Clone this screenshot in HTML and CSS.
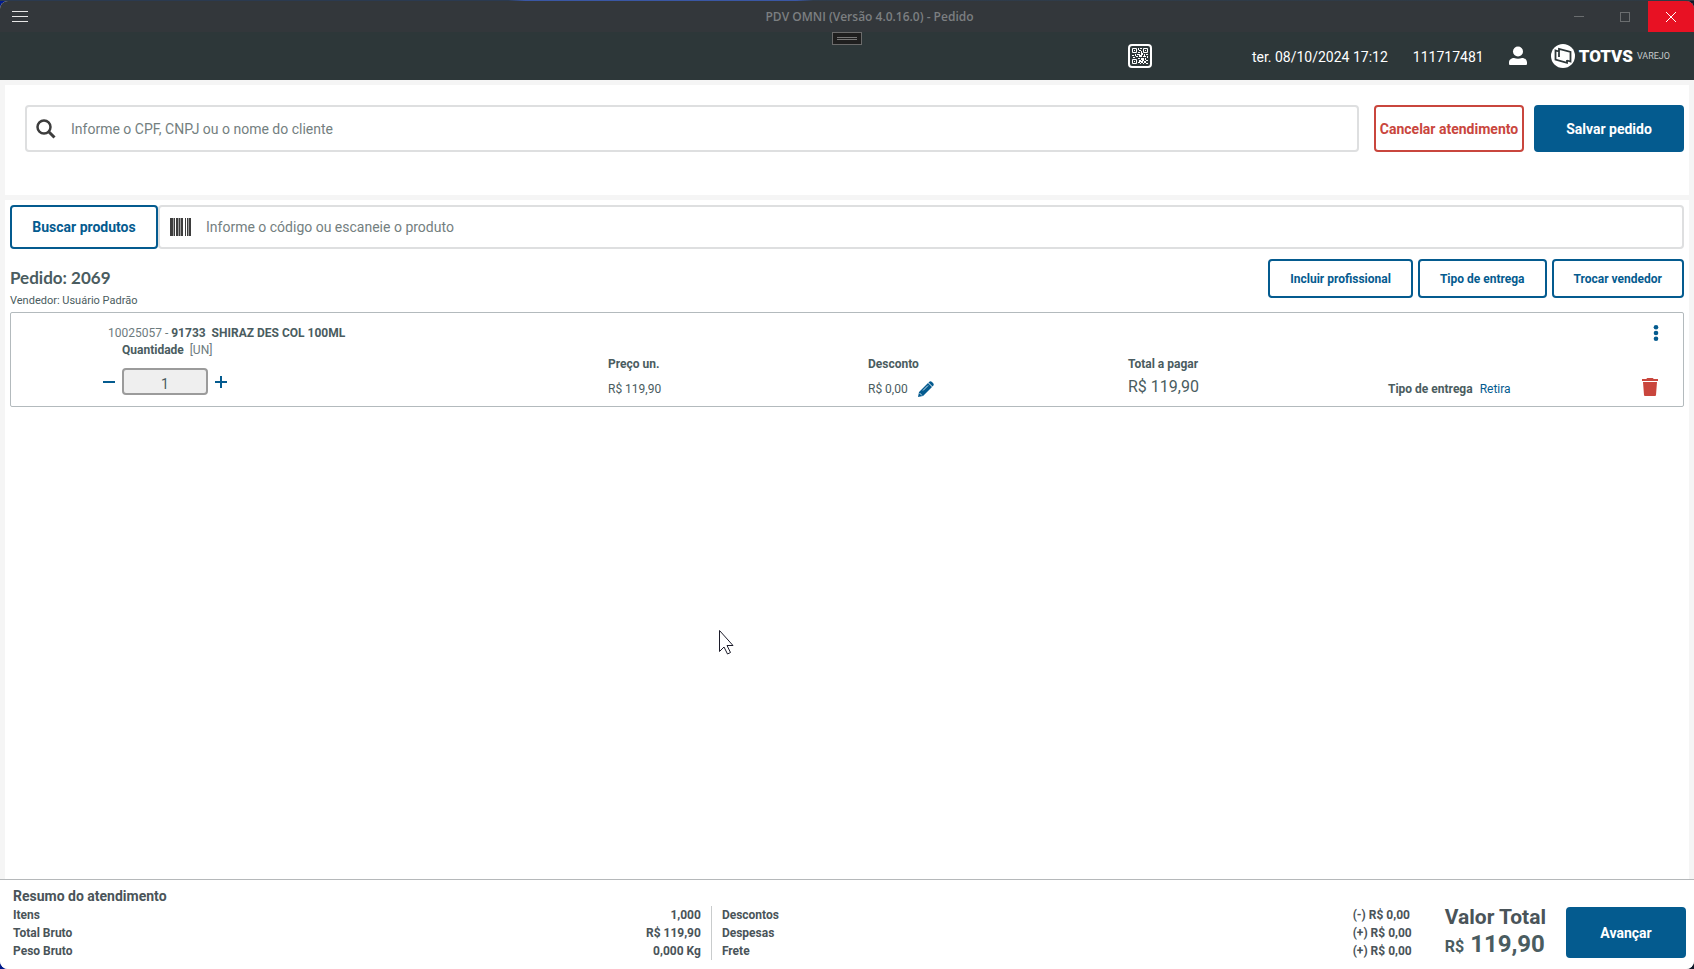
FILE: index.html
```html
<!DOCTYPE html>
<html lang="pt-BR">

<head>
    <meta charset="UTF-8">
    <meta name="viewport" content="width=device-width, initial-scale=1.0">
    <title>PDV OMNI - Pedido</title>
    <link rel="stylesheet" href="styles.css">
</head>

<body>
    <div class="window">
        <div class="titlebar">
            <button class="menu-btn" aria-label="Menu">
                <svg width="16" height="11" viewBox="0 0 16 11"><path d="M0 .5h16M0 5.500h16M0 10.500h16" stroke="#e6e6e6" stroke-width="1"/></svg>
            </button>
            <div class="window-title">PDV OMNI (Versão 4.0.16.0) - Pedido</div>
            <button class="win-btn" aria-label="Minimizar">
                <svg width="10" height="10" viewBox="0 0 10 10"><path d="M0 4.500h10" stroke="#6a6d6f"/></svg>
            </button>
            <button class="win-btn" aria-label="Maximizar">
                <svg width="10" height="10" viewBox="0 0 10 10"><rect x=".5" y=".5" width="9" height="9" fill="none" stroke="#6a6d6f"/></svg>
            </button>
            <button class="win-btn win-close" aria-label="Fechar">
                <svg width="10" height="10" viewBox="0 0 10 10"><path d="M0 0l10 10M10 0L0 10" stroke="#fff"/></svg>
            </button>
        </div>

        <header class="header">
            <button class="handle" aria-label="Recolher"><span></span></button>
            <button class="icon-btn qr" aria-label="QR Code">
                <svg width="24" height="24" viewBox="0 0 24 24" fill="#fff">
                    <rect x="1" y="1" width="22" height="22" rx="3" fill="none" stroke="#fff" stroke-width="2"/>
                    <path fill="none" stroke="#fff" d="M4.500 4.500h4v4h-4zM15.500 4.500h4v4h-4zM4.500 15.500h4v4h-4z"/>
                    <path d="M6 6h1v1H6zM17 6h1v1h-1zM6 17h1v1H6zM10 4h1v2h-1zM12 4h2v1h-2zM11 6h2v1h-2zM13 7h1v2h-1zM10 8h2v1h-2zM4 11h2v1H4zM7 10h1v2H7zM5 13h2v1H5zM8 12h2v1H8zM9 10h3v1H9zM11 11h3v2h-3zM13 9h2v2h-2zM16 10h1v2h-1zM18 10h2v1h-2zM15 12h3v1h-3zM19 12h1v2h-1zM10 14h2v1h-2zM13 14h3v2h-3zM17 14h1v2h-1zM11 16h2v2h-2zM10 18h2v1h-2zM14 16h2v1h-2zM18 16h2v1h-2zM13 17h2v2h-2zM16 17h2v2h-2zM12 19h1v1h-1zM15 19h1v1h-1zM18 19h2v1h-2z"/>
                </svg>
            </button>
            <span class="date">ter. 08/10/2024 17:12</span>
            <span class="user-id">111717481</span>
            <button class="icon-btn user" aria-label="Usuário">
                <svg width="18" height="20" viewBox="0 0 18 20" fill="#fff"><circle cx="9" cy="5.500" r="5"/><path d="M1 19a1 1 0 0 1-1-1v-1.500C0 13.500 2.500 12 5 12q4 1.500 8 0c2.500 0 5 1.500 5 4.500V18a1 1 0 0 1-1 1z"/></svg>
            </button>
            <div class="brand">
                <svg width="24" height="24" viewBox="0 0 24 24"><circle cx="12" cy="12" r="12" fill="#fff"/><path fill="none" stroke="#2d3739" stroke-width="1.800" d="M8 13V5l11.500 3v9.500L16 16.500M8 7.500L4.500 6.500V15.500L16 18.800V16"/></svg>
                <span class="brand-name">TOTVS</span>
                <span class="brand-line">VAREJO</span>
            </div>
        </header>

        <main class="content">
            <section class="customer panel">
                <label class="field customer-field">
                    <svg width="20" height="20" viewBox="0 0 20 20" fill="none" stroke="#3d3d3d"><circle cx="8" cy="8" r="6.500" stroke-width="2.500"/><path d="M12.500 12.500l6 6" stroke-width="3"/></svg>
                    <input type="text" aria-label="Cliente" placeholder="Informe o CPF, CNPJ ou o nome do cliente">
                </label>
                <button class="btn btn-danger">Cancelar atendimento</button>
                <button class="btn btn-primary">Salvar pedido</button>
            </section>

            <section class="order panel">
                <div class="product-search">
                    <button class="btn btn-search">Buscar produtos</button>
                    <label class="field product-field">
                        <svg width="21" height="18" viewBox="0 0 21 18" fill="#3d3d3d"><path d="M0 0h3v18H0zM4 0h1v18H4zM6 0h2v18H6zM9 0h1v18H9zM11 0h2v18h-2zM15 0h1v18h-1zM17 0h1v18h-1zM19 0h2v18h-2z"/><path d="M3 0h1v18H3zM8 0h1v18H8zM10 0h1v18h-1zM18 0h1v18h-1z" opacity=".5"/></svg>
                        <input type="text" aria-label="Produto" placeholder="Informe o código ou escaneie o produto">
                    </label>
                </div>

                <div class="order-head">
                    <div class="order-info">
                        <h1>Pedido: 2069</h1>
                        <p>Vendedor: Usuário Padrão</p>
                    </div>
                    <button class="btn btn-small">Incluir profissional</button>
                    <button class="btn btn-small">Tipo de entrega</button>
                    <button class="btn btn-small">Trocar vendedor</button>
                </div>

                <article class="item">
                    <div class="item-top">
                        <div class="item-name">10025057 - <b>91733&nbsp; SHIRAZ DES COL 100ML</b></div>
                        <button class="icon-btn" aria-label="Mais opções">
                            <svg width="6" height="16" viewBox="0 0 6 16" fill="#045b8f"><circle cx="3" cy="2.300" r="2.300"/><circle cx="3" cy="8" r="2.300"/><circle cx="3" cy="13.700" r="2.300"/></svg>
                        </button>
                    </div>
                    <div class="item-grid">
                        <div class="qty">
                            <label for="qty"><b>Quantidade</b> [UN]</label>
                            <div class="stepper">
                                <button class="icon-btn" aria-label="Diminuir">
                                    <svg width="12" height="12" viewBox="0 0 12 12"><path d="M0 6h12" stroke="#045b8f" stroke-width="2"/></svg>
                                </button>
                                <input type="text" id="qty" value="1">
                                <button class="icon-btn" aria-label="Aumentar">
                                    <svg width="12" height="12" viewBox="0 0 12 12"><path d="M0 6h12M6 0v12" stroke="#045b8f" stroke-width="2"/></svg>
                                </button>
                            </div>
                        </div>
                        <div class="cell">
                            <b>Preço un.</b>
                            <span class="value">R$ 119,90</span>
                        </div>
                        <div class="cell">
                            <b>Desconto</b>
                            <span class="value">R$ 0,00
                                <button class="icon-btn" aria-label="Editar desconto">
                                    <svg width="16" height="16" viewBox="0 0 16 16" fill="#045b8f"><path d="M0 16l1-5L10 2l4 4-9 9zM11 1q1.500-1.500 3 0l1 1q1.500 1.500 0 3l-.5.5-4-4z"/><path d="M5 9.500l5-5M1.500 12l2.500 2.500" stroke="#fff" stroke-width=".8"/></svg>
                                </button>
                            </span>
                        </div>
                        <div class="cell">
                            <b>Total a pagar</b>
                            <span class="value total">R$ 119,90</span>
                        </div>
                        <div class="delivery">
                            <b>Tipo de entrega</b>
                            <a href="#">Retira</a>
                            <button class="icon-btn trash" aria-label="Remover item">
                                <svg width="18" height="18" viewBox="0 0 18 18" fill="#c9463d"><path d="M1 1h4.500q0-1 1-1h5q1 0 1 1H17v2H1z"/><path d="M2 4h14l-1 13q0 1-1 1H4q-1 0-1-1z"/></svg>
                            </button>
                        </div>
                    </div>
                </article>
            </section>
        </main>

        <footer class="footer">
            <div class="summary">
                <h2>Resumo do atendimento</h2>
                <div class="summary-cols">
                    <table>
                        <tr><th>Itens</th><td>1,000</td></tr>
                        <tr><th>Total Bruto</th><td>R$ 119,90</td></tr>
                        <tr><th>Peso Bruto</th><td>0,000 Kg</td></tr>
                    </table>
                    <table class="charges">
                        <tr><th>Descontos</th><td>(-) R$ 0,00</td></tr>
                        <tr><th>Despesas</th><td>(+) R$ 0,00</td></tr>
                        <tr><th>Frete</th><td>(+) R$ 0,00</td></tr>
                    </table>
                </div>
            </div>
            <div class="grand-total">
                <div class="grand-label">Valor Total</div>
                <div class="grand-value"><small>R$</small> 119,90</div>
            </div>
            <button class="btn btn-primary btn-next">Avançar</button>
        </footer>
    </div>

    <svg class="cursor" width="15" height="25" viewBox="0 0 15 25"><path d="M.5.500v21l4.500-4.500 3.500 7 3-1.500-3.500-7h6z" fill="#fff" stroke="#1c1c2a"/></svg>
</body>

</html>
```

FILE: styles.css
```css
* {
    box-sizing: border-box;
}

body {
    margin: 0;
    padding-top: 1px;
    height: 100vh;
    font-family: Roboto, "Liberation Sans", sans-serif;
    font-size: 13px;
    color: #4a5c60;
    background: linear-gradient(to right, #2b3a50 30%, #3a57a5 31%, #3a57a5 47%, #2f3c4c 48%, #2f3a44) top / 100% 1px no-repeat, linear-gradient(to right, #001a8c, #101828);
}

button,
input {
    font-family: inherit;
    font-size: 14px;
    color: inherit;
}

button {
    padding: 0;
    border: none;
    background: none;
    cursor: pointer;
}

svg {
    display: block;
}

.window {
    display: flex;
    flex-direction: column;
    height: 100%;
    border-radius: 8px;
    overflow: hidden;
    background: #f5f5f5;
}

/* title bar */
.titlebar {
    display: flex;
    height: 31px;
    background: #33373b;
}

.menu-btn {
    padding: 0 12px;
}

.window-title {
    flex: 1;
    padding-left: 143px;
    text-align: center;
    font-family: "Open Sans", "Noto Sans", sans-serif;
    font-size: 12px;
    font-weight: 600;
    line-height: 31px;
    color: #7c7f81;
}

.win-btn {
    display: flex;
    align-items: center;
    justify-content: center;
    width: 46px;
}

.win-close {
    background: #e81123;
}

/* header */
.header {
    position: relative;
    display: flex;
    align-items: center;
    justify-content: flex-end;
    height: 48px;
    padding-right: 24px;
    background: #2d3739;
    color: #fff;
    font-size: 14px;
}

.handle {
    position: absolute;
    top: 0;
    left: 50%;
    width: 30px;
    height: 13px;
    margin-left: -15px;
    padding: 4px;
    border: 1px solid #6b6b6b;
    background: #1f1f1f;
}

.handle span {
    display: block;
    height: 3px;
    border: 1px solid #777;
    border-width: 1px 0;
}

.qr {
    margin-right: 100px;
}

.date,
.user-id {
    padding-top: 2px;
}

.date {
    margin-right: 25px;
}

.user-id {
    margin-right: 25px;
}

.user {
    margin-right: 24px;
}

.brand {
    display: flex;
    align-items: center;
    gap: 4px;
}

.brand-name {
    font-size: 17px;
    font-weight: 900;
}

.brand-line {
    font-size: 9px;
    font-weight: 400;
    color: #c5c9ca;
}

/* buttons and fields */
.btn {
    border: 2px solid #045b8f;
    border-radius: 4px;
    background: #fff;
    color: #045b8f;
    font-weight: 700;
}

.btn-primary {
    background: #045b8f;
    color: #fff;
}

.btn-danger {
    border-color: #c9463d;
    color: #c9463d;
}

.btn-small {
    height: 39px;
    padding: 0 20px;
    font-size: 12px;
}

.field {
    display: flex;
    flex: 1;
    align-items: center;
    border: 2px solid #dedfe0;
    border-radius: 4px;
    background: #fff;
}

.field input {
    flex: 1;
    padding: 0;
    border: none;
    outline: none;
    background: none;
}

.field input::placeholder {
    color: #74807f;
    opacity: 1;
}

/* content */
.content {
    display: flex;
    flex: 1;
    flex-direction: column;
    gap: 5px;
    padding: 5px 5px 0;
}

.panel {
    background: #fff;
}

.customer {
    display: flex;
    gap: 10px;
    height: 110px;
    padding: 20px 5px 43px 20px;
}

.customer .btn {
    width: 150px;
}

.customer-field {
    gap: 15px;
    margin-right: 5px;
    padding-left: 9px;
}

.order {
    flex: 1;
    padding: 5px;
}

.product-search {
    display: flex;
    height: 44px;
}

.btn-search {
    width: 148px;
}

.product-field {
    gap: 15px;
    padding-left: 10px;
}

.order-head {
    display: flex;
    gap: 5px;
    margin-top: 10px;
    height: 53px;
}

.order-info {
    flex: 1;
}

.order-info h1 {
    margin: 0;
    font-family: Lato, "Open Sans", sans-serif;
    font-size: 17px;
    line-height: 38px;
}

.order-info p {
    margin: 0;
    font-size: 11px;
    line-height: 8px;
}

/* order item */
.item {
    height: 95px;
    padding-top: 12px;
    border: 1px solid #b3babd;
    border-radius: 2px;
}

.item-top {
    display: flex;
    align-items: center;
    justify-content: space-between;
    padding: 0 24px 0 97px;
    font-size: 12px;
    line-height: 16px;
}

.item-grid {
    display: grid;
    grid-template-columns: 2fr 1fr 1fr 1fr 1fr;
    margin: 0 35px 0 77px;
    font-size: 12px;
}

.qty label {
    display: block;
    padding-left: 34px;
    line-height: 18px;
}

.qty label b {
    margin-right: 3px;
}

.item-name,
.qty label {
    color: #6d7b7e;
}

.item-name b,
.qty label b {
    color: #4a5c60;
}

.stepper {
    display: flex;
    align-items: center;
    gap: 7px;
    margin-top: 9px;
    padding-left: 15px;
}

.stepper input {
    width: 86px;
    height: 27px;
    padding: 4px 0 0;
    border: 2px solid #9b9b9b;
    border-radius: 4px;
    background: #efefef;
    text-align: center;
}

.cell {
    display: flex;
    flex-direction: column;
    padding-top: 13px;
}

.cell b {
    line-height: 20px;
}

.value {
    display: flex;
    align-items: center;
    gap: 10px;
    height: 29px;
}

.total {
    height: 24px;
    font-size: 16px;
}

.delivery {
    display: flex;
    align-items: center;
    gap: 7px;
    padding-top: 43px;
    height: 53px;
    line-height: 10px;
}

.delivery a {
    color: #045b8f;
    text-decoration: none;
}

.trash {
    margin: 0 -11px 4px auto;
}

/* footer */
.footer {
    display: flex;
    height: 90px;
    padding: 0 8px 0 13px;
    border-top: 1px solid #b5b8ba;
    background: #fff;
    color: #4a5459;
}

.summary {
    flex: 1;
}

.summary h2 {
    margin: 0;
    padding-top: 6px;
    font-size: 14px;
    line-height: 20px;
}

.summary-cols {
    display: flex;
    gap: 10px;
}

table {
    flex: 1;
    border-collapse: collapse;
    font-size: 12px;
    font-weight: 700;
    line-height: 18px;
}

th,
td {
    padding: 0;
    text-align: left;
}

td {
    text-align: right;
}

.charges {
    flex-basis: 14px;
    border-left: 1px solid #c9cccd;
}

.charges th {
    padding-left: 10px;
}

.charges td {
    width: 58px;
    text-align: left;
    white-space: nowrap;
}

.grand-total {
    margin: 24px 20px 0 32px;
    font-weight: 700;
}

.grand-label {
    font-size: 21px;
    line-height: 27px;
}

.grand-value {
    font-size: 24px;
    line-height: 27px;
    color: #4a5c60;
}

.grand-value small {
    font-size: 16px;
}

.btn-next {
    width: 120px;
    height: 51px;
    margin-top: 27px;
}

/* mouse pointer drawn over the page */
.cursor {
    position: absolute;
    top: 630px;
    left: 719px;
}
```
